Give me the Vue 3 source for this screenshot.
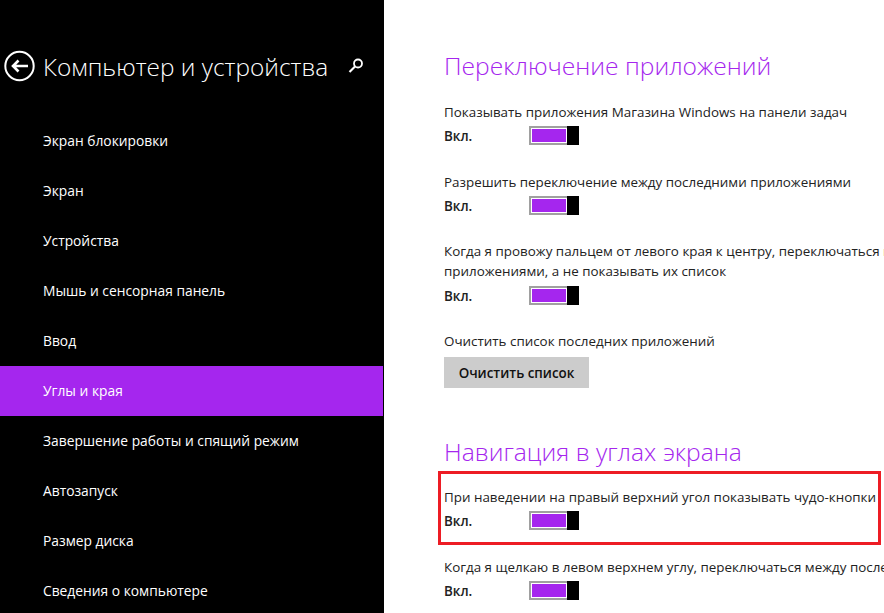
<script setup>
const nav = ['Экран блокировки','Экран','Устройства','Мышь и сенсорная панель','Ввод','Углы и края','Завершение работы и спящий режим','Автозапуск','Размер диска','Сведения о компьютере']
</script>

<template>
  <div class="page">
    <aside class="side">
      <header class="head">
        <svg class="back" width="35" height="32" viewBox="0 0 35 32">
          <circle cx="19.5" cy="16" r="14.2" fill="none" stroke="#fff" stroke-width="2"/>
          <path d="M28 16H13M18.5 10.5l-5.5 5.5 5.5 5.5" fill="none" stroke="#fff" stroke-width="2.6"/>
        </svg>
        <h1 class="title">Компьютер и устройства</h1>
        <svg class="search" width="16" height="16" viewBox="0 0 16 16">
          <circle cx="10" cy="5.5" r="4" fill="none" stroke="#fff" stroke-width="1.8"/>
          <path d="M7 8.5L1.5 14" stroke="#fff" stroke-width="2.2"/>
        </svg>
      </header>
      <nav class="nav">
        <div v-for="n in nav" :key="n" class="item" :class="{ on: n === 'Углы и края' }">{{ n }}</div>
      </nav>
    </aside>
    <main class="main">
      <h2 class="h first">Переключение приложений</h2>
      <div class="set one">
        <p>Показывать приложения Магазина Windows на панели задач</p>
        <div class="tog"><b>Вкл.</b><span class="sw"><i></i><u></u></span></div>
      </div>
      <div class="set">
        <p>Разрешить переключение между последними приложениями</p>
        <div class="tog"><b>Вкл.</b><span class="sw"><i></i><u></u></span></div>
      </div>
      <div class="set tight">
        <p>Когда я провожу пальцем от левого края к центру, переключаться между<br>приложениями, а не показывать их список</p>
        <div class="tog wide"><b>Вкл.</b><span class="sw"><i></i><u></u></span></div>
      </div>
      <div class="set tight">
        <p>Очистить список последних приложений</p>
        <button class="btn">Очистить список</button>
      </div>
      <h2 class="h second">Навигация в углах экрана</h2>
      <div class="set hl">
        <p>При наведении на правый верхний угол показывать чудо-кнопки</p>
        <div class="tog"><b>Вкл.</b><span class="sw"><i></i><u></u></span></div>
        <div class="red"></div>
      </div>
      <div class="set">
        <p>Когда я щелкаю в левом верхнем углу, переключаться между последними приложениями</p>
        <div class="tog"><b>Вкл.</b><span class="sw"><i></i><u></u></span></div>
      </div>
    </main>
  </div>
</template>

<style>
html, body { margin: 0; overflow: hidden; background: #fff; }
</style>
<style scoped>
.page { display: flex; width: 884px; height: 613px; overflow: hidden; font-family: "Open Sans", "Noto Sans", sans-serif; }
.side { width: 384px; flex: none; background: #000; color: #fff; }
.head { display: flex; align-items: center; height: 32px; padding-top: 50px; }
.back { flex: none; }
.title { margin: 0 0 0 8px; font-size: 24.4px; font-weight: 300; white-space: nowrap; }
.search { margin-left: 20px; flex: none; }
.nav { margin-top: 34px; }
.item { width: 383px; height: 50px; line-height: 50px; padding-left: 43px; box-sizing: border-box; font-size: 13.8px; }
.item.on { background: #a526ee; }
.main { flex: 1; padding-left: 60px; min-width: 0; overflow: hidden; color: #222; font-size: 13.4px; white-space: nowrap; }
.h { margin: 0; height: 32px; line-height: 32px; color: #a526ee; font-size: 24.6px; font-weight: 300; }
.first { margin-top: 50px; }
.second { margin-top: 48px; }
.set { position: relative; margin-top: 26px; }
.set.tight { margin-top: 25px; }
.set.one { margin-top: 20px; }
.set.hl { margin-top: 19px; }
.set p { margin: 0; line-height: 20px; }
.tog { display: flex; align-items: center; height: 20px; margin-top: 4px; }
.tog.wide { margin-top: 5px; }
.tog b { width: 85px; font-weight: 600; }
.sw { display: flex; width: 50px; height: 19px; align-self: flex-start; }
.sw i { width: 38px; height: 19px; box-sizing: border-box; border: 2px solid #a0a0a0; border-right: 0; background: #a526ee; box-shadow: inset 0 0 0 1px #fff; }
.sw u { width: 12px; height: 19px; background: #000; }
.btn { display: block; margin-top: 6px; width: 145px; height: 31px; padding: 0; border: 0; background: #ccc; font: 600 13.4px "Open Sans", sans-serif; color: #111; }
.red { position: absolute; left: -6px; top: -16px; width: 443px; height: 74px; box-sizing: border-box; border: 3px solid #ed1c24; }
</style>
